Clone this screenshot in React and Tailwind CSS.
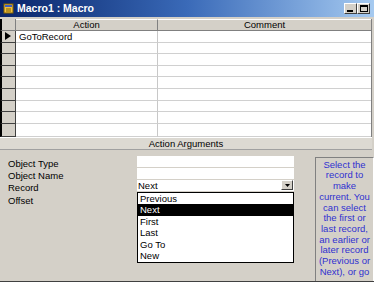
import React from "react";

const rows = ["GoToRecord", "", "", "", "", "", "", "", ""];
const options = ["Previous", "Next", "First", "Last", "Go To", "New"];
const helpLines = [
  "Select the",
  "record to",
  "make",
  "current. You",
  "can select",
  "the first or",
  "last record,",
  "an earlier or",
  "later record",
  "(Previous or",
  "Next), or go",
];

const font = { fontFamily: '"Liberation Sans", Arial, sans-serif' };

const MacroIcon = () => (
  <svg width="11" height="11" viewBox="0 0 11 11">
    <rect x="1" y="1" width="9" height="9" fill="#f0c040" stroke="#806000" strokeWidth="1" />
    <rect x="2" y="2" width="7" height="2" fill="#4060c0" />
    <line x1="3" y1="6" x2="8" y2="6" stroke="#806000" />
    <line x1="3" y1="8" x2="8" y2="8" stroke="#806000" />
  </svg>
);

const TitleButton = ({ kind }) => (
  <div className="w-[13px] h-[11px] bg-[#d4d0c8] border border-t-white border-l-white border-r-[#404040] border-b-[#404040] flex items-center justify-center">
    {kind === "min" ? (
      <div className="w-[6px] h-[2px] bg-black mt-[5px] -ml-[1px]" />
    ) : (
      <div className="w-[8px] h-[7px] border border-black border-t-2" />
    )}
  </div>
);

const App = () => {
  return (
    <div
      className="w-[374px] h-[282px] bg-[#d4d0c8] flex flex-col overflow-hidden text-[9.5px] text-black border-b border-[#404040]"
      style={font}
    >
      {/* Title bar */}
      <div className="h-[17px] shrink-0 flex items-center pl-[3px] pr-[3px] bg-gradient-to-r from-[#0a246a] via-[#3a6ab8] to-[#a6caf0]">
        <MacroIcon />
        <span className="ml-[3px] text-white font-bold text-[10.5px] leading-none">Macro1 : Macro</span>
        <div className="ml-auto flex mr-[1px]">
          <TitleButton kind="min" />
          <TitleButton kind="max" />
        </div>
      </div>

      {/* Macro grid */}
      <div className="shrink-0 mt-[2px] mr-[2px] border-r border-[#808080] bg-white flex flex-col">
        <div className="flex h-[12px] bg-[#d4d0c8]">
          <div className="w-[16px] border-l-2 border-l-black border-r border-r-[#808080] border-b border-b-[#808080]" />
          <div className="w-[142px] flex items-center justify-center border-r border-r-[#808080] border-b border-b-[#808080] border-t border-t-white leading-none">
            Action
          </div>
          <div className="flex-1 flex items-center justify-center border-b border-b-[#808080] border-t border-t-white leading-none">
            Comment
          </div>
        </div>
        {rows.map((r, i) => (
          <div key={i} className={`flex ${i === rows.length - 1 ? "h-[13px]" : "h-[11.6px]"}`}>
            <div className="w-[16px] bg-[#d4d0c8] border-l-2 border-l-black border-r border-r-[#404040] border-b border-b-[#404040] flex items-center pl-[3px]">
              {i === 0 && (
                <svg width="6" height="8" viewBox="0 0 6 8">
                  <path d="M0 0 L6 4 L0 8 Z" fill="black" />
                </svg>
              )}
            </div>
            <div className="w-[142px] border-r border-r-[#c8c8c8] border-b border-b-[#d0d0d0] flex items-center pl-[3px] leading-none">
              {r}
            </div>
            <div className="flex-1 border-b border-b-[#d0d0d0]" />
          </div>
        ))}
      </div>

      {/* Action Arguments bar */}
      <div className="h-[13px] shrink-0 flex items-center justify-center bg-[#dcd9d2] border-t border-t-white border-b border-b-[#a0a0a0] mr-[2px] leading-none">
        Action Arguments
      </div>

      {/* Arguments panel */}
      <div className="flex-1 flex pt-[6px] relative">
        <div className="w-[137px] shrink-0 pl-[8px] pt-[2px] flex flex-col leading-[12.3px]">
          <span>Object Type</span>
          <span>Object Name</span>
          <span>Record</span>
          <span>Offset</span>
        </div>
        <div className="w-[157px] shrink-0 flex flex-col gap-[1px] relative">
          <div className="h-[11px] bg-white" />
          <div className="h-[11px] bg-white" />
          <div className="h-[11px] bg-white flex items-center justify-between leading-none pl-[1px]">
            <span>Next</span>
            <div className="w-[12px] h-[10px] mr-[1px] bg-[#d4d0c8] border border-t-white border-l-white border-r-[#404040] border-b-[#404040] flex items-center justify-center">
              <svg width="5" height="3" viewBox="0 0 5 3">
                <path d="M0 0 L5 0 L2.5 3 Z" fill="black" />
              </svg>
            </div>
          </div>
          {/* Dropdown list */}
          <div className="absolute left-0 top-[36px] w-[157px] h-[71px] bg-white border border-black flex flex-col">
            {options.map((o) => (
              <div
                key={o}
                className={`h-[11.6px] flex items-center pl-[2px] leading-none ${
                  o === "Next" ? "bg-black text-white" : ""
                }`}
              >
                {o}
              </div>
            ))}
          </div>
        </div>
        <div className="ml-[21px] w-[59px] shrink-0 mt-[1px] border border-t-[#808080] border-l-[#808080] border-r-white border-b-0 flex flex-col items-center pt-[2px] text-[#3030d0] leading-[10.7px] text-center">
          {helpLines.map((l) => (
            <span key={l} className="whitespace-nowrap">
              {l}
            </span>
          ))}
        </div>
      </div>
    </div>
  );
};

export default App;
